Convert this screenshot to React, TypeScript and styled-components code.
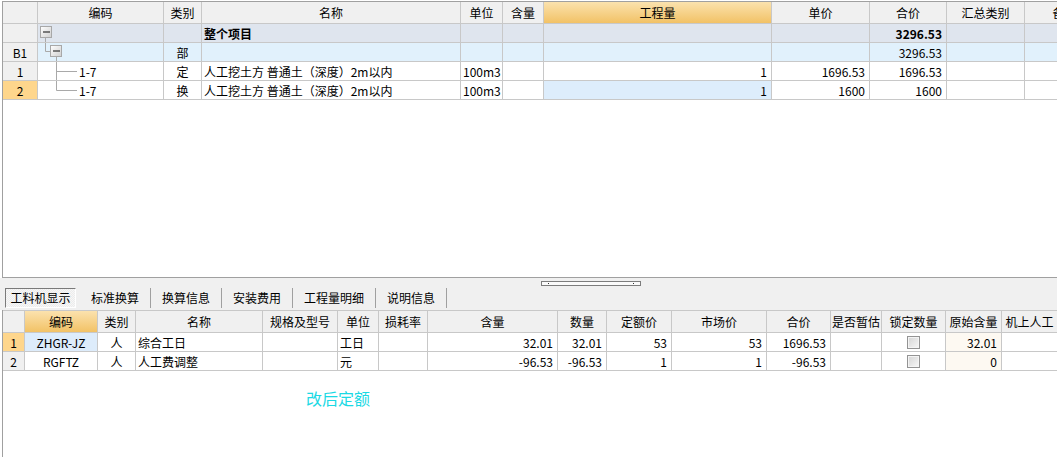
import React from 'react';
import styled, { createGlobalStyle } from 'styled-components';

const GlobalStyle = createGlobalStyle`
  html, body {
    margin: 0;
    padding: 0;
    background: #fff;
  }
  body {
    font-family: "Noto Sans CJK SC", "Noto Sans", sans-serif;
    font-size: 12px;
    color: #000;
    overflow: hidden;
  }
`;

const LINE = '#c8c8c8';
const HEAD_BG = '#f0f0f0';
const HOT_BG = 'linear-gradient(#fbe2ae, #f2c266)';
const ACTIVE_NUM = '#fed68c';

const TOP_COLS = '35px 126px 38px 259px 42px 41px 228px 98px 77px 78px 80px';
const BOTTOM_COLS =
  '22px 73px 38px 127px 75px 41px 49px 130px 49px 65px 95px 64px 51px 64px 56px 56px';

type Align = 'left' | 'center' | 'right';

const Page = styled.div`
  width: 1057px;
  height: 457px;
  display: flex;
  flex-direction: column;
  overflow: hidden;
`;

const TopPanel = styled.div`
  margin: 1px 0 0 2px;
  height: 277px;
  box-sizing: border-box;
  border-left: 1px solid #a0a0a0;
  border-top: 1px solid #a0a0a0;
  border-bottom: 1px solid #a0a0a0;
  background: #fff;
  overflow: hidden;
  flex-shrink: 0;
`;

const Row = styled.div<{ $cols: string; $h: number }>`
  display: grid;
  grid-template-columns: ${({ $cols }) => $cols};
  height: ${({ $h }) => $h}px;
`;

const Cell = styled.div<{ $align?: Align; $bg?: string; $bold?: boolean }>`
  box-sizing: border-box;
  display: flex;
  align-items: center;
  justify-content: ${({ $align }) =>
    $align === 'right' ? 'flex-end' : $align === 'center' ? 'center' : 'flex-start'};
  padding: 0 ${({ $align }) => ($align === 'right' ? '4px' : '2px')} 0 2px;
  border-right: 1px solid ${LINE};
  border-bottom: 1px solid ${LINE};
  background: ${({ $bg }) => $bg ?? 'transparent'};
  font-weight: ${({ $bold }) => ($bold ? 700 : 400)};
  white-space: nowrap;
  overflow: hidden;
`;

const HeadCell = styled(Cell)<{ $hot?: boolean }>`
  justify-content: center;
  background: ${({ $hot }) => ($hot ? HOT_BG : HEAD_BG)};
`;

const TreeCell = styled(Cell)`
  padding-left: 0;
  gap: 1px;
`;

const Band = styled.div`
  height: 32px;
  background: #f0f0f0;
  display: flex;
  flex-direction: column;
  flex-shrink: 0;
`;

const Grip = styled.div`
  margin: 3px 0 0 541px;
  width: 100px;
  height: 5px;
  box-sizing: border-box;
  border: 1px solid #7c7c7c;
  background: #fafafa;
  display: flex;
  justify-content: space-between;
  align-items: center;
  padding: 0 6px;

  span {
    width: 1px;
    height: 1px;
    background: #333;
  }
`;

const TabStrip = styled.div`
  margin-top: 1px;
  height: 21px;
  display: flex;
  align-items: center;
  padding-left: 5px;
`;

const ActiveTab = styled.div`
  box-sizing: border-box;
  width: 71px;
  height: 20px;
  margin-right: 4px;
  display: flex;
  align-items: center;
  justify-content: center;
  border: 1px solid;
  border-color: #7a7a7a #ffffff #ffffff #7a7a7a;
  background: repeating-conic-gradient(#f7f7f7 0 25%, #ececec 0 50%) 0 0 / 2px 2px;
`;

const Tab = styled.div`
  height: 20px;
  padding: 0 11px;
  display: flex;
  align-items: center;
  border-right: 1px solid #a0a0a0;
`;

const BottomPanel = styled.div`
  flex: 1;
  margin-left: 2px;
  border-left: 1px solid #a0a0a0;
  background: #fff;
  overflow: hidden;
`;

const BottomHead = styled(Row)`
  border-top: 1px solid ${LINE};
`;

const Check = styled.span`
  width: 13px;
  height: 13px;
  box-sizing: border-box;
  border: 1px solid #939393;
  box-shadow: inset 0 0 0 1px #f4f4f4;
  background: linear-gradient(135deg, #d4d4d4, #f7f7f7);
`;

const Note = styled.div`
  margin: 19px 0 0 303px;
  font-size: 16px;
  line-height: 16px;
  color: #1ad9e4;
`;

const TreeLines = ({ kind }: { kind: 'root' | 'branch' | 'mid' | 'last' }) => {
  const stroke = '#a9a9a9';
  const box = (x: number) => (
    <g>
      <rect x={x + 0.5} y={2.5} width={11} height={11} fill="url(#tbox)" stroke="#a8a8a8" />
      <line x1={x + 3} y1={8} x2={x + 10} y2={8} stroke="#303030" strokeWidth={1.2} />
    </g>
  );
  return (
    <svg width={40} height={18} viewBox="0 0 40 18" style={{ flexShrink: 0 }}>
      <defs>
        <linearGradient id="tbox" x1="0" y1="0" x2="1" y2="1">
          <stop offset="0" stopColor="#ffffff" />
          <stop offset="1" stopColor="#cfcfcf" />
        </linearGradient>
      </defs>
      {kind === 'root' && (
        <>
          <line x1={7.5} y1={14} x2={7.5} y2={18} stroke={stroke} />
          {box(2)}
        </>
      )}
      {kind === 'branch' && (
        <>
          <line x1={7.5} y1={0} x2={7.5} y2={8.5} stroke={stroke} />
          <line x1={7.5} y1={8.5} x2={12} y2={8.5} stroke={stroke} />
          <line x1={18.5} y1={14} x2={18.5} y2={18} stroke={stroke} />
          {box(12)}
        </>
      )}
      {kind === 'mid' && (
        <>
          <line x1={18.5} y1={0} x2={18.5} y2={18} stroke={stroke} />
          <line x1={18.5} y1={9.5} x2={39} y2={9.5} stroke={stroke} />
        </>
      )}
      {kind === 'last' && (
        <>
          <line x1={18.5} y1={0} x2={18.5} y2={9.5} stroke={stroke} />
          <line x1={18.5} y1={9.5} x2={39} y2={9.5} stroke={stroke} />
        </>
      )}
    </svg>
  );
};

const topHeads = ['', '编码', '类别', '名称', '单位', '含量', '工程量', '单价', '合价', '汇总类别', '备注'];

type TopRow = {
  num: string;
  tree: 'root' | 'branch' | 'mid' | 'last';
  code: string;
  kind: string;
  name: string;
  unit: string;
  qty: string;
  price: string;
  total: string;
  bg?: string;
  bold?: boolean;
  active?: boolean;
};

const topRows: TopRow[] = [
  { num: '', tree: 'root', code: '', kind: '', name: '整个项目', unit: '', qty: '', price: '', total: '3296.53', bg: '#dfe5ee', bold: true },
  { num: 'B1', tree: 'branch', code: '', kind: '部', name: '', unit: '', qty: '', price: '', total: '3296.53', bg: '#e1f1fc' },
  { num: '1', tree: 'mid', code: '1-7', kind: '定', name: '人工挖土方 普通土（深度）2m以内', unit: '100m3', qty: '1', price: '1696.53', total: '1696.53' },
  { num: '2', tree: 'last', code: '1-7', kind: '换', name: '人工挖土方 普通土（深度）2m以内', unit: '100m3', qty: '1', price: '1600', total: '1600', active: true },
];

const tabs = ['标准换算', '换算信息', '安装费用', '工程量明细', '说明信息'];

const bottomHeads = ['', '编码', '类别', '名称', '规格及型号', '单位', '损耗率', '含量', '数量', '定额价', '市场价', '合价', '是否暂估', '锁定数量', '原始含量', '机上人工'];

type BottomRow = {
  num: string;
  code: string;
  kind: string;
  name: string;
  unit: string;
  amount: string;
  count: string;
  quota: string;
  market: string;
  total: string;
  origin: string;
  active?: boolean;
};

const bottomRows: BottomRow[] = [
  { num: '1', code: 'ZHGR-JZ', kind: '人', name: '综合工日', unit: '工日', amount: '32.01', count: '32.01', quota: '53', market: '53', total: '1696.53', origin: '32.01', active: true },
  { num: '2', code: 'RGFTZ', kind: '人', name: '人工费调整', unit: '元', amount: '-96.53', count: '-96.53', quota: '1', market: '1', total: '-96.53', origin: '0' },
];

export default function App() {
  return (
    <Page>
      <GlobalStyle />
      <TopPanel>
        <Row $cols={TOP_COLS} $h={22}>
          {topHeads.map((h, i) => (
            <HeadCell key={i} $hot={h === '工程量'}>
              {h}
            </HeadCell>
          ))}
        </Row>
        {topRows.map((r, i) => (
          <Row key={i} $cols={TOP_COLS} $h={19}>
            <Cell $align="center" $bg={r.active ? ACTIVE_NUM : HEAD_BG}>
              {r.num}
            </Cell>
            <TreeCell $bg={r.bg}>
              <TreeLines kind={r.tree} />
              {r.code}
            </TreeCell>
            <Cell $align="center" $bg={r.bg}>{r.kind}</Cell>
            <Cell $bg={r.bg} $bold={r.bold}>{r.name}</Cell>
            <Cell $bg={r.bg}>{r.unit}</Cell>
            <Cell $bg={r.bg} />
            <Cell $align="right" $bg={r.active ? '#ddedfc' : r.bg}>{r.qty}</Cell>
            <Cell $align="right" $bg={r.bg}>{r.price}</Cell>
            <Cell $align="right" $bg={r.bg} $bold={r.bold}>{r.total}</Cell>
            <Cell $bg={r.bg} />
            <Cell $bg={r.bg} />
          </Row>
        ))}
      </TopPanel>

      <Band>
        <Grip>
          <span />
          <span />
        </Grip>
        <TabStrip>
          <ActiveTab>工料机显示</ActiveTab>
          {tabs.map((t) => (
            <Tab key={t}>{t}</Tab>
          ))}
        </TabStrip>
      </Band>

      <BottomPanel>
        <BottomHead $cols={BOTTOM_COLS} $h={22}>
          {bottomHeads.map((h, i) => (
            <HeadCell key={i} $hot={h === '编码'}>
              {h}
            </HeadCell>
          ))}
        </BottomHead>
        {bottomRows.map((r) => (
          <Row key={r.num} $cols={BOTTOM_COLS} $h={19}>
            <Cell $align="center" $bg={r.active ? ACTIVE_NUM : HEAD_BG}>{r.num}</Cell>
            <Cell $align="center" $bg={r.active ? '#ddecfb' : undefined}>{r.code}</Cell>
            <Cell $align="center">{r.kind}</Cell>
            <Cell>{r.name}</Cell>
            <Cell />
            <Cell>{r.unit}</Cell>
            <Cell />
            <Cell $align="right">{r.amount}</Cell>
            <Cell $align="right">{r.count}</Cell>
            <Cell $align="right">{r.quota}</Cell>
            <Cell $align="right">{r.market}</Cell>
            <Cell $align="right">{r.total}</Cell>
            <Cell />
            <Cell $align="center">
              <Check />
            </Cell>
            <Cell $align="right" $bg="#fdf9f2">{r.origin}</Cell>
            <Cell />
          </Row>
        ))}
        <Note>改后定额</Note>
      </BottomPanel>
    </Page>
  );
}
